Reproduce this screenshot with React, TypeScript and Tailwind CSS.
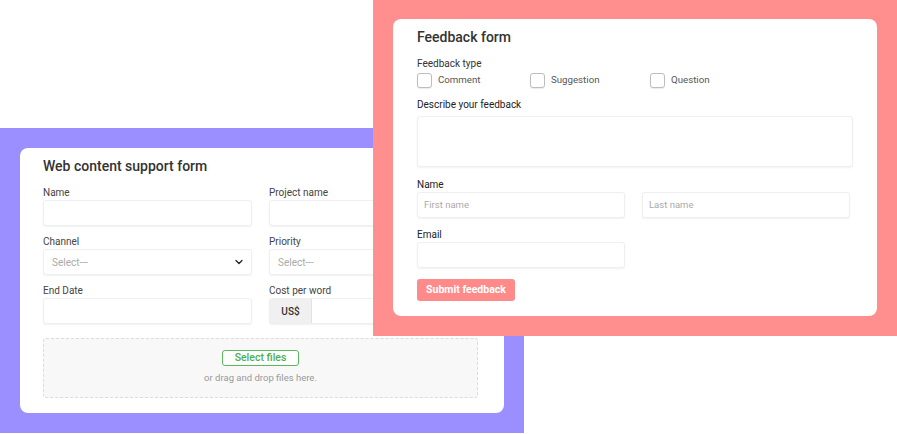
import { ChevronDown } from "lucide-react";

function Field({ label, children }: { label: string; children: React.ReactNode }) {
  return (
    <div className="flex flex-col">
      <span className="text-[10px] leading-[14px] text-[#444]">{label}</span>
      {children}
    </div>
  );
}

function Box({ placeholder, h = "h-[26px]" }: { placeholder?: string; h?: string }) {
  return (
    <div
      className={`${h} rounded-[3px] border border-[#efefef] bg-white shadow-[0_1px_2px_rgba(0,0,0,0.06)] flex items-center px-[6px] text-[9.5px] text-[#aaa]`}
    >
      {placeholder}
    </div>
  );
}

function Checkbox({ label }: { label: string }) {
  return (
    <div className="flex items-center gap-[6px]">
      <div className="w-[15px] h-[15px] rounded-[3px] border border-[#bdbdbd] bg-white shadow-[0_1px_1px_rgba(0,0,0,0.08)]" />
      <span className="text-[9.7px] text-[#555]">{label}</span>
    </div>
  );
}

function WebForm() {
  return (
    <div className="absolute left-0 top-[128px] w-[524px] h-[305px] bg-[#9b8fff] p-5">
      <div className="bg-white rounded-[8px] h-full px-[23px] pt-[8px]">
        <h2 className="text-[14px] leading-[20px] font-medium text-[#333]">Web content support form</h2>
        <div className="grid grid-cols-2 gap-x-[17px] gap-y-[9px] mt-[10px] w-[435px]">
          <Field label="Name">
            <Box />
          </Field>
          <Field label="Project name">
            <Box />
          </Field>
          <Field label="Channel">
            <div className="h-[26px] rounded-[3px] border border-[#efefef] bg-white shadow-[0_1px_2px_rgba(0,0,0,0.06)] flex items-center justify-between pl-[8px] pr-[6px] text-[10px] text-[#aaa]">
              Select---
              <ChevronDown size={12} strokeWidth={2.5} className="text-[#222]" />
            </div>
          </Field>
          <Field label="Priority">
            <div className="h-[26px] rounded-[3px] border border-[#efefef] bg-white shadow-[0_1px_2px_rgba(0,0,0,0.06)] flex items-center px-[8px] text-[10px] text-[#aaa]">
              Select---
            </div>
          </Field>
          <Field label="End Date">
            <Box />
          </Field>
          <Field label="Cost per word">
            <div className="h-[26px] rounded-[3px] border border-[#efefef] bg-white shadow-[0_1px_2px_rgba(0,0,0,0.06)] flex">
              <div className="w-[42px] bg-[#f0f0f0] border-r border-[#e2e2e2] flex items-center justify-center text-[10px] font-medium text-[#333]">
                US$
              </div>
            </div>
          </Field>
        </div>
        <div className="mt-[14px] w-[435px] h-[60px] border border-dashed border-[#dcdcdc] rounded-[3px] bg-[#f8f8f8] flex flex-col items-center pt-[11px]">
          <div className="h-[16px] w-[77px] rounded-[3px] border border-[#5cb85c] bg-white flex items-center justify-center text-[10.5px] font-medium text-[#4cae4c]">
            Select files
          </div>
          <span className="text-[9.5px] leading-[12px] text-[#999] mt-[6px]">or drag and drop files here.</span>
        </div>
      </div>
    </div>
  );
}

function FeedbackForm() {
  return (
    <div className="absolute left-[373px] top-0 w-[524px] h-[336px] bg-[#ff8e8e] pt-[19px] px-5 pb-5">
      <div className="bg-white rounded-[8px] h-full px-[24px] pt-[8px]">
        <h2 className="text-[14px] leading-[20px] font-medium text-[#333]">Feedback form</h2>
        <div className="mt-[10px] text-[10px] leading-[14px] text-[#333]">Feedback type</div>
        <div className="flex mt-[2px] h-[15px]">
          <div className="w-[113px]">
            <Checkbox label="Comment" />
          </div>
          <div className="w-[120px]">
            <Checkbox label="Suggestion" />
          </div>
          <Checkbox label="Question" />
        </div>
        <div className="mt-[10px] text-[10px] leading-[14px] text-[#222]">Describe your feedback</div>
        <div className="mt-[4px] w-[436px]">
          <Box h="h-[51px]" />
        </div>
        <div className="mt-[11px] text-[10px] leading-[14px] text-[#222]">Name</div>
        <div className="grid grid-cols-2 gap-x-[17px] w-[433px]">
          <Box placeholder="First name" />
          <Box placeholder="Last name" />
        </div>
        <div className="mt-[10px] text-[10px] leading-[14px] text-[#222]">Email</div>
        <div className="w-[208px]">
          <Box />
        </div>
        <button className="mt-[11px] h-[22px] w-[98px] rounded-[3px] bg-[#ff8a8a] text-white text-[10.5px] font-bold">
          Submit feedback
        </button>
      </div>
    </div>
  );
}

export default function App() {
  return (
    <div className="relative w-[897px] h-[434px] bg-white overflow-hidden font-['Roboto',sans-serif]">
      <WebForm />
      <FeedbackForm />
    </div>
  );
}
